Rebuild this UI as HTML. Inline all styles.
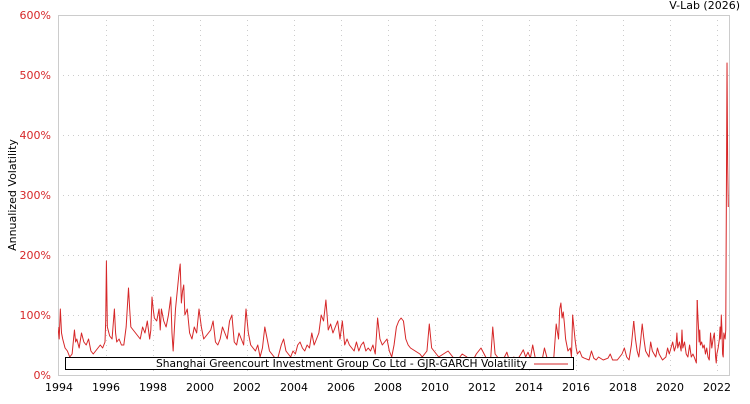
<!DOCTYPE html>
<html><head><meta charset="utf-8"><style>
body{margin:0;background:#fff;width:750px;height:400px;overflow:hidden;font-family:"DejaVu Sans","Liberation Sans",sans-serif}
</style></head><body>
<svg width="750" height="400" xmlns="http://www.w3.org/2000/svg" font-family="DejaVu Sans, Liberation Sans, sans-serif">
<rect x="58.5" y="15.5" width="671" height="360" fill="#fff" stroke="#ccc"/>
<g stroke="#ccc" stroke-dasharray="1,4" stroke-width="1">
<line x1="58" y1="75.5" x2="729" y2="75.5"/><line x1="58" y1="135.5" x2="729" y2="135.5"/>
<line x1="58" y1="195.5" x2="729" y2="195.5"/><line x1="58" y1="255.5" x2="729" y2="255.5"/>
<line x1="58" y1="315.5" x2="729" y2="315.5"/>
<line x1="106.5" y1="15" x2="106.5" y2="375"/><line x1="153.5" y1="15" x2="153.5" y2="375"/>
<line x1="200.5" y1="15" x2="200.5" y2="375"/><line x1="247.5" y1="15" x2="247.5" y2="375"/>
<line x1="294.5" y1="15" x2="294.5" y2="375"/><line x1="341.5" y1="15" x2="341.5" y2="375"/>
<line x1="388.5" y1="15" x2="388.5" y2="375"/><line x1="435.5" y1="15" x2="435.5" y2="375"/>
<line x1="482.5" y1="15" x2="482.5" y2="375"/><line x1="529.5" y1="15" x2="529.5" y2="375"/>
<line x1="576.5" y1="15" x2="576.5" y2="375"/><line x1="623.5" y1="15" x2="623.5" y2="375"/>
<line x1="670.5" y1="15" x2="670.5" y2="375"/><line x1="717.5" y1="15" x2="717.5" y2="375"/>
</g>
<g fill="#d62728" font-size="11" text-anchor="end">
<text x="51" y="19">600%</text><text x="51" y="79">500%</text><text x="51" y="139">400%</text>
<text x="51" y="199">300%</text><text x="51" y="259">200%</text><text x="51" y="319">100%</text>
<text x="51" y="379">0%</text></g>
<text transform="translate(16,195) rotate(-90)" font-size="11" text-anchor="middle" fill="#000">Annualized Volatility</text>
<text x="740" y="9" font-size="11" text-anchor="end" fill="#000">V-Lab (2026)</text>
<g font-size="11" text-anchor="middle" fill="#000">
<text x="59" y="391">1994</text><text x="106" y="391">1996</text><text x="153" y="391">1998</text>
<text x="200" y="391">2000</text><text x="247" y="391">2002</text><text x="294" y="391">2004</text>
<text x="341" y="391">2006</text><text x="388" y="391">2008</text><text x="435" y="391">2010</text>
<text x="482" y="391">2012</text><text x="529" y="391">2014</text><text x="576" y="391">2016</text>
<text x="623" y="391">2018</text><text x="670" y="391">2020</text><text x="717" y="391">2022</text></g>
<svg x="58" y="15" width="671" height="360" overflow="hidden">
<g fill="none" stroke="#d62728" stroke-width="1" stroke-linejoin="round">
<polyline transform="translate(0,360) scale(23.5,-0.6)" vector-effect="non-scaling-stroke" points="
0,80 0.05,60 0.1,110 0.15,70 0.2,60 0.3,45 0.4,40 0.5,30 0.6,35 0.7,75 0.75,55 0.8,60 0.9,45 1.0,70 1.1,55 1.2,50 1.3,60 1.4,40 1.5,35 1.6,40 1.7,45 1.8,50 1.9,45 2.0,55 2.03,90 2.06,190 2.1,80 2.2,65 2.3,60 2.4,110 2.45,70 2.5,55 2.6,60 2.7,50 2.8,50 2.9,80 3.0,145 3.05,110 3.1,80 3.2,75 3.3,70 3.4,65 3.5,60 3.6,80 3.7,70 3.8,90 3.9,60 3.95,75 4.0,130 4.05,110 4.1,95 4.2,90 4.3,110 4.35,75 4.4,110 4.5,90 4.6,80 4.7,100 4.8,130 4.85,70 4.9,40 5.0,110 5.1,150 5.15,170 5.2,185 5.25,120 5.3,140 5.35,150 5.4,100 5.5,110 5.6,70 5.7,60 5.8,80 5.9,70 6.0,110 6.1,80 6.2,60 6.3,65 6.4,70 6.5,75 6.6,90 6.7,55 6.8,50 6.9,60 7.0,80 7.1,70 7.2,60 7.3,90 7.4,100 7.5,55 7.6,50 7.7,70 7.8,60 7.9,50 8.0,110 8.1,70 8.2,50 8.3,45 8.4,40 8.5,50 8.6,30 8.7,45 8.8,80 8.9,60 9.0,40 9.1,35 9.2,30 9.3,20 9.4,35 9.5,50 9.6,60 9.7,40 9.8,35 9.9,30 10.0,40 10.1,35 10.2,50 10.3,55 10.4,45 10.5,40 10.6,50 10.7,45 10.8,70 10.9,50 11.0,60 11.1,70 11.2,100 11.3,90 11.4,125 11.5,75 11.6,85 11.7,70 11.8,80 11.9,90 12.0,60 12.1,90 12.2,50 12.3,60 12.4,50 12.5,45 12.6,40 12.7,55 12.8,40 12.9,50 13.0,55 13.1,40 13.2,45 13.3,40 13.4,50 13.5,35 13.6,95 13.7,60 13.8,50 13.9,55 14.0,60 14.1,40 14.2,30 14.3,50 14.4,80 14.5,90 14.6,95 14.7,90 14.8,60 14.9,50 15.0,45 15.2,40 15.4,35 15.5,30 15.6,35 15.7,40 15.8,85 15.9,45 16.0,40 16.2,30 16.4,35 16.6,40 16.8,30 17.0,25 17.2,35 17.4,30 17.6,20 17.8,35 18.0,45 18.2,30 18.4,20 18.5,80 18.6,35 18.8,25 19.0,30 19.1,38 19.2,25 19.4,30 19.5,22 19.7,35 19.8,42 19.9,30 20.0,38 20.1,28 20.2,50 20.3,30 20.4,20 20.5,10 20.6,25 20.7,45 20.8,30 20.9,10 21.0,20 21.05,10 21.1,30 21.2,85 21.3,60 21.35,110 21.4,120 21.45,95 21.5,105 21.55,85 21.6,60 21.7,40 21.8,45 21.85,30 21.9,100 22.0,60 22.05,45 22.1,35 22.2,40 22.3,30 22.4,28 22.6,25 22.7,40 22.8,28 22.9,25 23.0,30 23.2,25 23.4,28 23.5,35 23.6,25 23.8,25 24.0,35 24.1,45 24.2,30 24.3,25 24.4,50 24.5,90"/>
<polyline transform="translate(0,360) scale(23.5,-0.6) matrix(0.72,0,0,1,6.86,0)" vector-effect="non-scaling-stroke" points="
24.5,90 24.6,60 24.7,40 24.8,30 24.9,55 25.0,85 25.1,60 25.2,40 25.3,35 25.4,30 25.5,55 25.6,40 25.7,35 25.8,30 25.9,45 26.0,35 26.1,30 26.2,25 26.4,30 26.5,45 26.6,35 26.8,55 26.9,40 27.0,50 27.05,70 27.1,45 27.2,55 27.3,40 27.35,75 27.4,45 27.5,55 27.6,35 27.7,30 27.8,50 27.9,30 28.0,35 28.1,28 28.2,20 28.25,125"/>
<polyline transform="translate(0,360) scale(23.5,-0.6) matrix(0.54,0,0,1,11.945,0)" vector-effect="non-scaling-stroke" points="
28.25,125 28.3,100 28.35,80 28.4,55 28.45,75 28.5,50 28.6,55 28.7,45 28.8,50 28.9,35 29.0,45 29.1,30 29.2,25 29.3,70 29.4,45 29.5,60 29.6,70 29.7,30 29.75,20 29.8,35 29.9,45 30.0,60 30.05,80 30.1,60 30.15,100 30.2,75 30.25,35 30.3,30 30.35,70 30.4,65 30.45,60 30.5,75 30.55,300 30.6,520 30.65,350 30.7,280"/>
</g>
</svg>
<rect x="65.5" y="357.5" width="508" height="12" fill="#fff" stroke="#000"/>
<text x="156" y="367" font-size="11" textLength="371" lengthAdjust="spacingAndGlyphs" fill="#000">Shanghai Greencourt Investment Group Co Ltd - GJR-GARCH Volatility</text>
<line x1="534" y1="364" x2="568" y2="364" stroke="#d62728"/>
</svg>
</body></html>
